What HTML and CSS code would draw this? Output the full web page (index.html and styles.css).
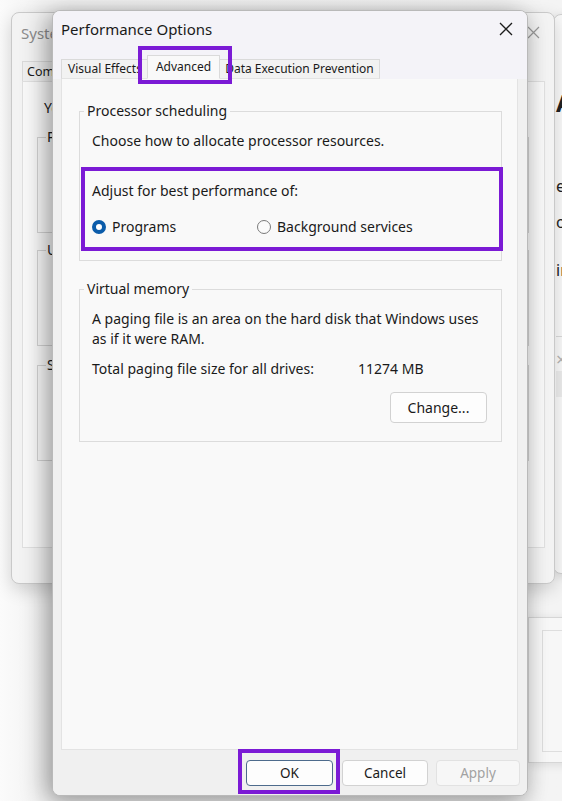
FILE: index.html
```html
<!DOCTYPE html>
<html lang="en">
<head>
<meta charset="utf-8">
<title>Performance Options</title>
<link rel="stylesheet" href="styles.css">
</head>
<body>
<div class="desk">

  <div class="win win-far">
    <div class="far-body">
      <div class="far-a">A</div>
      <div class="far-line far-e">e</div>
      <div class="far-line far-o">o</div>
      <div class="far-line far-in">in</div>
      <div class="far-sep"></div>
      <div class="far-x">×</div>
      <div class="far-band"></div>
    </div>
  </div>

  <div class="win win-low">
    <div class="low-inner"></div>
  </div>

  <div class="win win-back">
    <div class="back-title">
      <span class="back-title-text">System Properties</span>
      <svg class="back-close" width="13" height="13" viewBox="0 0 13 13"><path d="M1 1L12 12M12 1L1 12" stroke="#9a9a9a" stroke-width="1.2" fill="none"/></svg>
    </div>
    <div class="back-tabs"><span class="back-tab">Computer Name</span></div>
    <div class="back-panel">
      <div class="back-y">You must be logged on</div>
      <fieldset class="back-group g1"><legend>Performance</legend></fieldset>
      <fieldset class="back-group g2"><legend>User Profiles</legend></fieldset>
      <fieldset class="back-group g3"><legend>Startup and Recovery</legend></fieldset>
    </div>
  </div>

  <div class="win dialog">
    <div class="titlebar">
      <span class="title">Performance Options</span>
      <svg class="close" width="14" height="14" viewBox="0 0 14 14"><path d="M1 1L13 13M13 1L1 13" stroke="#1b1b1b" stroke-width="1.3" fill="none"/></svg>
    </div>
    <div class="tabs">
      <span class="tab tab-first">Visual Effects</span>
      <span class="tab tab-on">Advanced</span>
      <span class="tab tab-last">Data Execution Prevention</span>
    </div>
    <div class="panel">
      <fieldset class="group group-proc">
        <legend>Processor scheduling</legend>
        <p class="txt pad desc">Choose how to allocate processor resources.</p>
        <div class="hl-box">
          <p class="txt">Adjust for best performance of:</p>
          <div class="radios">
            <label class="radio"><span class="dot dot-on"></span>Programs</label>
            <label class="radio"><span class="dot"></span>Background services</label>
          </div>
        </div>
      </fieldset>
      <fieldset class="group group-vm">
        <legend>Virtual memory</legend>
        <p class="txt pad vm-desc">A paging file is an area on the hard disk that Windows uses<br>as if it were RAM.</p>
        <div class="txt pad total"><span class="total-label">Total paging file size for all drives:</span><span>11274 MB</span></div>
        <div class="change-row"><button class="btn btn-change">Change...</button></div>
      </fieldset>
    </div>
    <div class="footer">
      <span class="ok-wrap"><button class="btn btn-ok">OK</button></span>
      <button class="btn">Cancel</button>
      <button class="btn btn-off">Apply</button>
    </div>
  </div>

</div>
</body>
</html>
```

FILE: styles.css
```css
* { box-sizing: border-box; }
html, body { margin: 0; padding: 0; }
body {
  width: 562px;
  height: 801px;
  overflow: hidden;
  background: #f3f3f3;
  font-family: "Noto Sans", "Open Sans", sans-serif;
  color: #1a1a1a;
}
.desk {
  position: relative;
  width: 562px;
  height: 801px;
  overflow: hidden;
  background: linear-gradient(90deg, #fbfbfb 0px, #f3f3f3 40px, #f4f4f4 100%);
}
.win { position: absolute; }

/* far right window */
.win-far {
  left: 553px;
  top: 14px;
  width: 120px;
  height: 560px;
  background: #f9f9f9;
  border: 1px solid #cfcfcf;
  border-radius: 8px;
  box-shadow: 0 2px 10px rgba(0,0,0,0.12);
}
.far-body { padding: 74px 0 0 2px; font-size: 16px; color: #222; }
.far-a { font-weight: 700; font-size: 24px; line-height: 28px; }
.far-line { line-height: 20px; }
.far-e { margin-top: 59px; }
.far-o { margin-top: 16px; }
.far-in { margin-top: 28px; }
.far-sep { margin-top: 56px; border-top: 1px solid #d9d9d9; }
.far-x { margin-top: 12px; color: #b3b3b3; font-size: 18px; line-height: 20px; }
.far-band { margin-top: 2px; height: 26px; background: #ececec; }

/* low right window */
.win-low {
  left: 528px;
  top: 617px;
  width: 80px;
  height: 146px;
  background: #f7f7f7;
  border: 1px solid #d6d6d6;
  box-shadow: 0 2px 10px rgba(0,0,0,0.10);
  padding: 12px 0 0 0;
}
.low-inner {
  margin-left: 13px;
  width: 60px;
  height: 122px;
  border: 1px solid #dedede;
  border-right: none;
}

/* background system properties window */
.win-back {
  left: 11px;
  top: 12px;
  width: 544px;
  height: 572px;
  background: #f3f3f3;
  border: 1px solid #c9c9c9;
  border-radius: 8px;
  box-shadow: 0 6px 18px rgba(0,0,0,0.16);
  display: flex;
  flex-direction: column;
}
.back-title {
  height: 39px;
  flex: none;
  display: flex;
  align-items: center;
  justify-content: space-between;
  padding: 0 14px 0 9px;
  font-size: 15px;
  color: #8c8c8c;
}
.back-tabs { padding-left: 10px; height: 29px; flex: none; display: flex; align-items: flex-end; }
.back-tab {
  font-size: 12.5px;
  line-height: 19px;
  padding: 0 4px;
  border: 1px solid #dadada;
  border-bottom: none;
  background: #f0f0f0;
}
.back-panel {
  margin: 0 9px 0 10px;
  height: 467px;
  flex: none;
  background: #f9f9f9;
  border: 1px solid #e0e0e0;
  padding: 16px 15px 0 14px;
  font-size: 14px;
}
.back-y { line-height: 20px; margin-left: 7px; }
.back-group {
  margin: 0;
  padding: 0;
  height: 105px;
  border: 1px solid #d4d4d4;
  min-width: 0;
}
.back-group legend { padding: 0 1px; margin-left: 8px; line-height: 18px; font-size: 14px; }
.back-group.g1 { margin-top: 10px; }
.back-group.g2 { margin-top: 8px; }
.back-group.g3 { margin-top: 10px; }

/* main dialog */
.dialog {
  left: 52px;
  top: 10px;
  width: 476px;
  height: 786px;
  background: #f0f0f0;
  border: 1px solid #b9b9b9;
  border-radius: 8px;
  box-shadow: -6px 4px 26px rgba(0,0,0,0.32), 0 8px 20px rgba(0,0,0,0.12);
  display: flex;
  flex-direction: column;
  overflow: hidden;
}
.titlebar {
  height: 35px;
  flex: none;
  background: #f4f3f8;
  display: flex;
  align-items: center;
  justify-content: space-between;
  padding: 0 14px 0 8px;
}
.title { font-size: 15px; color: #1a1a1a; }
.tabs {
  height: 33px;
  flex: none;
  display: flex;
  align-items: flex-end;
  padding-left: 8px;
  background: #f4f3f8;
  position: relative;
  z-index: 2;
  margin-bottom: -1px;
}
.tab {
  font-size: 12px;
  line-height: 18px;
  height: 20px;
  padding: 0 5px;
  border: 1px solid #dadada;
  border-bottom: 1px solid #e3e3e3;
  background: #f2f2f2;
  white-space: nowrap;
}
.tab-first { padding-left: 6px; }
.tab + .tab { margin-left: -1px; }
.tab-on {
  height: 24px;
  line-height: 21px;
  padding: 0 8px;
  background: #f9f9f9;
  border-bottom-color: #f9f9f9;
  position: relative;
  z-index: 1;
}
.tab-on::after {
  content: "";
  position: absolute;
  left: -10px;
  right: -13px;
  top: -10px;
  bottom: -6px;
  border: 4px solid #7b1ad5;
}
.panel {
  flex: none;
  height: 672px;
  margin: 0 9px 0 8px;
  background: #f9f9f9;
  border: 1px solid #e3e3e3;
  padding: 23px 15px 0 17px;
}
.group {
  margin: 0;
  padding: 0;
  border: 1px solid #dcdcdc;
  min-width: 0;
}
.group legend {
  font-size: 14px;
  line-height: 18px;
  padding: 0 3px;
  margin-left: 4px;
}
.txt { margin: 0; font-size: 14px; line-height: 20px; }
.pad { padding-left: 12px; }
.desc { margin-top: 11px; }
.hl-box {
  margin: 16px 0 9px 1px;
  width: 422px;
  border: 4px solid #7b1ad5;
  padding: 10px 0 10px 7px;
}
.radios { display: grid; grid-template-columns: 165px auto; margin-top: 16px; }
.radio { display: flex; align-items: center; font-size: 14px; line-height: 20px; }
.dot {
  width: 14px;
  height: 14px;
  border-radius: 50%;
  border: 1px solid #7a7a7a;
  background: #fbfbfb;
  margin-right: 6px;
  flex: none;
}
.dot-on {
  border: 4px solid #0b5caa;
  background: #ffffff;
}
.group-vm { margin-top: 19px; padding-bottom: 18px; }
.vm-desc { margin-top: 11px; }
.total { margin-top: 10px; display: flex; }
.total-label { width: 266px; }
.change-row { display: flex; justify-content: flex-end; margin: 13px 14px 0 0; }
.btn {
  font-family: "Noto Sans", "Open Sans", sans-serif;
  font-size: 13.5px;
  color: #1a1a1a;
  background: #fdfdfd;
  border: 1px solid #d2d2d2;
  border-radius: 4px;
  height: 26px;
  width: 86px;
  padding: 0;
}
.btn-change { width: 97px; height: 31px; font-size: 14px; }
.footer {
  flex: 1;
  display: flex;
  justify-content: flex-end;
  align-items: flex-start;
  gap: 8px;
  padding: 10px 7px 0 0;
  background: #f0f0f0;
}
.ok-wrap { position: relative; display: flex; margin-right: 1px; }
.ok-wrap::after {
  content: "";
  position: absolute;
  left: -8px;
  right: -7px;
  top: -11px;
  bottom: -8px;
  border: 4px solid #7b1ad5;
}
.btn-ok { border: 1px solid #4d6b8c; width: 87px; }
.btn-off { color: #a2a2a2; background: #f7f7f7; border-color: #e2e2e2; width: 84px; }
```
